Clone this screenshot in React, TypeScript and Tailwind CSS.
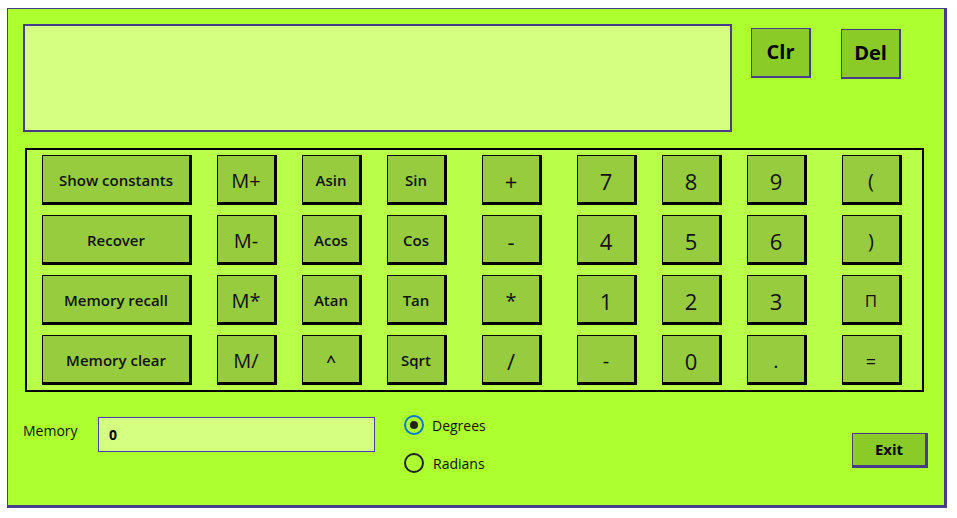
import React from "react";

type K = { t: string; w?: number; ml: number; size: string };

const L = "text-[15px] font-semibold";
const rows: K[][] = [
  [
    { t: "Show constants", w: 150, ml: 0, size: L },
    { t: "M+", ml: 25, size: "text-[20px] font-medium" },
    { t: "Asin", ml: 25, size: L },
    { t: "Sin", ml: 25, size: L },
    { t: "+", ml: 35, size: "text-[22px] font-medium" },
    { t: "7", ml: 35, size: "text-[22px] font-medium" },
    { t: "8", ml: 25, size: "text-[22px] font-medium" },
    { t: "9", ml: 25, size: "text-[22px] font-medium" },
    { t: "(", ml: 35, size: "text-[20px] font-medium" },
  ],
  [
    { t: "Recover", w: 150, ml: 0, size: L },
    { t: "M-", ml: 25, size: "text-[20px] font-medium" },
    { t: "Acos", ml: 25, size: L },
    { t: "Cos", ml: 25, size: L },
    { t: "-", ml: 35, size: "text-[22px] font-medium" },
    { t: "4", ml: 35, size: "text-[22px] font-medium" },
    { t: "5", ml: 25, size: "text-[22px] font-medium" },
    { t: "6", ml: 25, size: "text-[22px] font-medium" },
    { t: ")", ml: 35, size: "text-[20px] font-medium" },
  ],
  [
    { t: "Memory recall", w: 150, ml: 0, size: L },
    { t: "M*", ml: 25, size: "text-[20px] font-medium" },
    { t: "Atan", ml: 25, size: L },
    { t: "Tan", ml: 25, size: L },
    { t: "*", ml: 35, size: "text-[20px] font-medium" },
    { t: "1", ml: 35, size: "text-[22px] font-medium" },
    { t: "2", ml: 25, size: "text-[22px] font-medium" },
    { t: "3", ml: 25, size: "text-[22px] font-medium" },
    { t: "Π", ml: 35, size: "text-[17px] font-medium" },
  ],
  [
    { t: "Memory clear", w: 150, ml: 0, size: L },
    { t: "M/", ml: 25, size: "text-[20px] font-medium" },
    { t: "^", ml: 25, size: "text-[17px] font-semibold" },
    { t: "Sqrt", ml: 25, size: L },
    { t: "/", ml: 35, size: "text-[22px] font-medium" },
    { t: "-", ml: 35, size: "text-[20px] font-medium" },
    { t: "0", ml: 25, size: "text-[22px] font-medium" },
    { t: ".", ml: 25, size: "text-[20px] font-medium" },
    { t: "=", ml: 35, size: "text-[18px] font-medium" },
  ],
];

const mlClass: Record<number, string> = {
  0: "ml-0",
  25: "ml-[25px]",
  35: "ml-[35px]",
};

function Key({ k }: { k: K }) {
  return (
    <div
      className={`${mlClass[k.ml]} ${k.w ? "w-[150px]" : "w-[60px]"} h-[50px] flex items-center justify-center bg-[#97CC3F] border-t border-l border-r-[3px] border-b-[3px] border-black text-[#111] ${k.size} leading-none pt-[3px]`}
    >
      {k.t}
    </div>
  );
}

export default function App() {
  return (
    <div
      className="w-[957px] h-[518px] bg-white pt-[8px] pl-[7px]"
      style={{ fontFamily: '"Open Sans", "Noto Sans", sans-serif' }}
    >
      <div className="w-[940px] h-[500px] bg-[#ADFF2F] border-l border-t border-r-[3px] border-b-[3px] border-[#483D8B] pt-[15px] pl-[15px] pr-[15px]">
        {/* top */}
        <div className="flex items-start">
          <div className="w-[709px] h-[108px] border-2 border-[#483D8B] bg-[#D4FF80]" />
          <div className="ml-[19px] mt-[4px] w-[60px] h-[50px] flex items-center justify-center bg-[#8ACB27] border-t border-l border-r-2 border-b-2 border-[#483D8B] text-[20px] font-bold text-black pb-[1px]">
            Clr
          </div>
          <div className="ml-[30px] mt-[5px] w-[60px] h-[50px] flex items-center justify-center bg-[#8ACB27] border-t border-l border-r-2 border-b-2 border-[#483D8B] text-[20px] font-bold text-black pb-[1px]">
            Del
          </div>
        </div>

        {/* keypad */}
        <div className="mt-[16px] ml-[2px] w-[899px] h-[244px] border-2 border-black bg-[#B9FF4A] pt-[5px] pl-[15px] flex flex-col gap-[10px]">
          {rows.map((r, i) => (
            <div key={i} className="flex">
              {r.map((k, j) => (
                <Key key={j} k={k} />
              ))}
            </div>
          ))}
        </div>

        {/* bottom */}
        <div className="flex items-start mt-[25px]">
          <div className="w-[75px] mt-[4px] text-[14px] leading-[20px] text-[#111]">Memory</div>
          <div className="w-[277px] h-[35px] border border-[#4B3FB8] bg-[#D4FF80] flex items-center pl-[10px] text-[14px] font-bold text-black">
            0
          </div>
          <div className="ml-[29px] -mt-[2px] flex flex-col gap-[18px]">
            <div className="flex items-center h-[20px]">
              <div className="w-[20px] h-[20px] rounded-full border-2 border-[#0078D7] flex items-center justify-center">
                <div className="w-[8px] h-[8px] rounded-full bg-[#222]" />
              </div>
              <span className="ml-[8px] text-[14px] text-[#111]">Degrees</span>
            </div>
            <div className="flex items-center h-[20px]">
              <div className="w-[20px] h-[20px] rounded-full border-2 border-[#222]" />
              <span className="ml-[9px] text-[14px] text-[#111]">Radians</span>
            </div>
          </div>
          <div className="ml-auto mr-[1px] mt-[16px] w-[76px] h-[35px] flex items-center justify-center bg-[#8ACB27] border-t border-l border-r-[3px] border-b-[3px] border-[#483D8B] text-[15px] font-bold text-black">
            Exit
          </div>
        </div>
      </div>
    </div>
  );
}
